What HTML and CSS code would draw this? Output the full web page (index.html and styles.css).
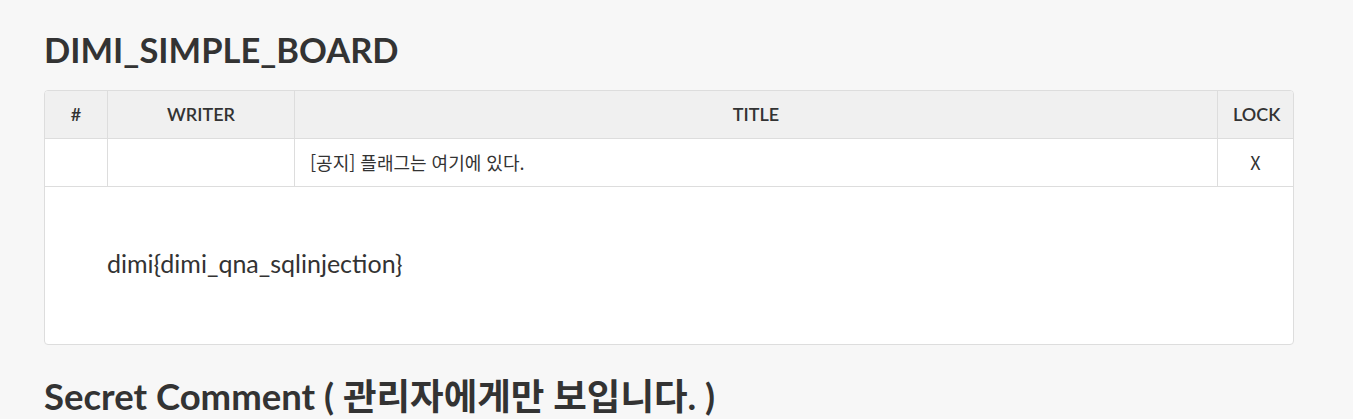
FILE: index.html
```html
<!DOCTYPE html>
<html lang="ko">
<head>
<meta charset="utf-8">
<title>DIMI_SIMPLE_BOARD</title>
<link rel="stylesheet" href="styles.css">
</head>
<body>
<div class="page">
  <h1 class="title">DIMI_SIMPLE_BOARD</h1>
  <div class="board">
    <table class="board-table">
      <thead>
        <tr>
          <th class="c-num">#</th>
          <th class="c-writer">WRITER</th>
          <th class="c-title">TITLE</th>
          <th class="c-lock">LOCK</th>
        </tr>
      </thead>
      <tbody>
        <tr class="post-row">
          <td class="c-num"></td>
          <td class="c-writer"></td>
          <td class="c-title post-title">[공지] 플래그는 여기에 있다.</td>
          <td class="c-lock post-lock">X</td>
        </tr>
        <tr class="content-row">
          <td colspan="4" class="post-content"><div class="content-text">dimi{dimi_qna_sqlinjection}</div></td>
        </tr>
      </tbody>
    </table>
  </div>
  <h2 class="subtitle">Secret Comment ( 관리자에게만 보입니다. )</h2>
</div>
</body>
</html>
```
FILE: styles.css
```css
html, body {
  margin: 0;
  padding: 0;
}
body {
  background: #f7f7f7;
  color: #333;
  font-family: Lato, "Noto Sans CJK KR", sans-serif;
  overflow: hidden;
}
.page {
  width: 1250px;
  padding-left: 44px;
}
.title {
  font-size: 34.5px;
  font-weight: 700;
  line-height: 1.1;
  margin: 31px 0 21px;
}
.board {
  width: 1250px;
  box-sizing: border-box;
  border: 1px solid #ddd;
  border-radius: 4px;
  background: #fff;
  overflow: hidden;
}
.board-table {
  width: 100%;
  border-collapse: separate;
  border-spacing: 0;
  table-layout: fixed;
}
.board-table th,
.board-table td {
  box-sizing: border-box;
  border-right: 1px solid #ddd;
  border-bottom: 1px solid #ddd;
  padding: 0 15px;
  height: 48px;
  vertical-align: middle;
}
.board-table th:last-child,
.board-table td:last-child {
  border-right: 0;
}
.board-table th {
  background: #f0f0f0;
  font-size: 18px;
  font-weight: 600;
  text-align: center;
}
.c-num { width: 63px; }
.c-writer { width: 187px; }
.c-title { width: 923px; }
.c-lock { width: 75px; }
.post-title {
  font-family: "Noto Sans CJK KR", sans-serif;
  font-size: 18px;
  text-align: left;
}
.post-lock {
  font-family: "Noto Sans CJK KR", sans-serif;
  font-size: 18px;
  text-align: center;
}
.board-table .post-content {
  height: 157px;
  border-bottom: 0;
  border-right: 0;
  padding: 61px 62px 0;
  vertical-align: top;
}
.content-text {
  font-size: 25px;
  line-height: 30px;
}
.subtitle {
  font-size: 36.5px;
  font-weight: 700;
  line-height: 1.1;
  margin: 31px 0 0;
}
```
